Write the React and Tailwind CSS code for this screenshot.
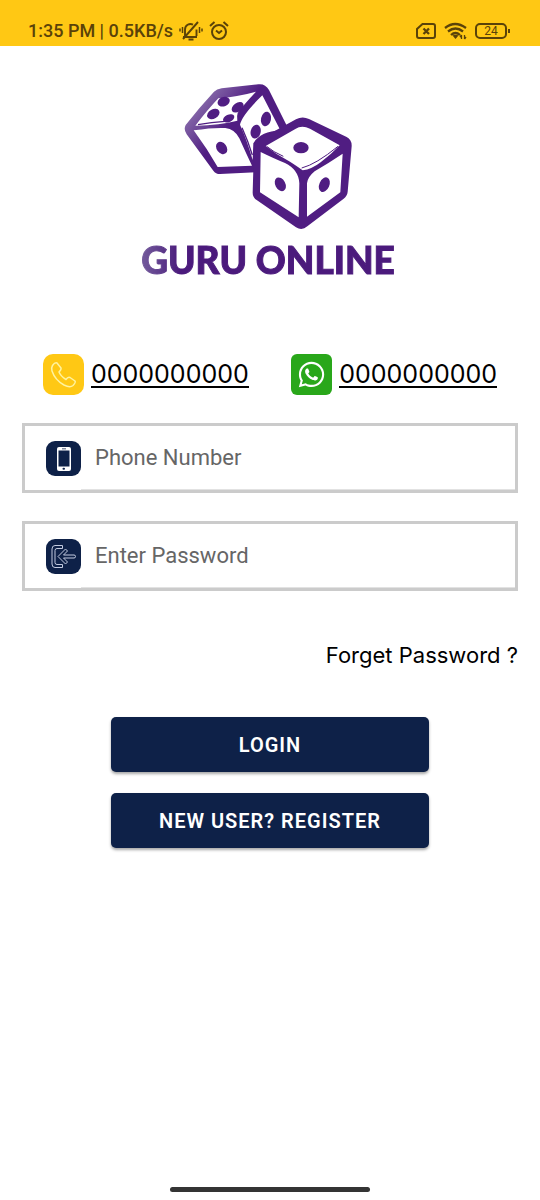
import { useState } from 'react';
import { FaWhatsapp } from 'react-icons/fa';
import { clsx } from 'clsx';

function StatusBar() {
  return (
    <header className="flex h-[46px] items-end justify-between bg-[#ffc814] pr-[30px] pb-1 pl-7 text-[#5a4209]">
      <div className="flex items-center">
        <span className="font-[Roboto,sans-serif] text-lg leading-[22px] font-medium">1:35 PM | 0.5KB/s</span>
        <svg className="ml-1.5 h-5 w-6" viewBox="0 0 24 20" fill="none" stroke="currentColor" strokeWidth="1.9">
          <path d="M6 15V8.500a5.500 5.500 0 0 1 8-4.900M17.500 8.500V15M4 16h14M9.500 18.500h5M19 1 4 18" />
          <path d="M3.500 6v6M1 7.500v3M20.500 6v6M23 7.500v3" strokeWidth="1.500" />
        </svg>
        <svg className="ml-1.5 h-5 w-5" viewBox="0 0 20 20" fill="none" stroke="currentColor" strokeWidth="2">
          <circle cx="10" cy="11" r="7" />
          <path d="m1 5 4.500-4M19 5l-4.500-4M7 9.500l3 2.500 3-2.500" />
        </svg>
      </div>
      <div className="flex items-center gap-2 pb-0.5">
        <svg className="h-[18px] w-5" viewBox="0 0 20 18" fill="none" stroke="currentColor" strokeWidth="2">
          <path d="M6.500 2H17a2 2 0 0 1 2 2v10a2 2 0 0 1-2 2H3a2 2 0 0 1-2-2V7Z" />
          <path d="m7.500 6.500 5.500 5.500m0-5.500L7.500 12" strokeWidth="2.300" />
        </svg>
        <svg className="h-[18px] w-[23px]" viewBox="0 0 23 18" fill="none" stroke="currentColor" strokeWidth="2.300">
          <path d="M1 6q10-8 21 0M4 9.500q7.500-6 15 0M7 13q4.500-4 9 0" />
          <path d="m8.500 13.500 3 3.500 3-3.500q-3-1.500-6 0" fill="currentColor" stroke="none" />
          <path d="M17.500 17v-4m-1.500 2 1.500-2M20.500 13v4m1.500-2-1.500 2" strokeWidth="1.300" />
        </svg>
        <div className="flex items-center gap-px">
          <span className="flex h-4 w-8 items-center justify-center rounded-[5px] border-2 border-current font-[Roboto,sans-serif] text-xs leading-3">24</span>
          <span className="h-1 w-0.5 bg-current" />
        </div>
      </div>
    </header>
  );
}

function DiceLogo() {
  return (
    <svg className="h-[165px] w-[200px]" viewBox="0 0 600 495" role="img" aria-label="Two dice">
      <defs>
        <linearGradient id="dice" gradientUnits="userSpaceOnUse" x1="50" y1="60" x2="170" y2="160">
          <stop offset="0" stopColor="#9a86b8" />
          <stop offset="1" stopColor="#501d82" />
        </linearGradient>
      </defs>
      <path d="M47 150Q90 95 132 50Q140 43 155 40L265 28Q285 25 297 45L352 155L258 292L150 297Q137 297 130 287L50 178Q40 164 47 150Z" fill="url(#dice)" />
      <path d="M76 152Q112 105 145 70Q200 66 258 50Q220 90 203 114Q200 122 202 137Q150 150 76 152Z" fill="#fff" />
      <path d="M71 166Q130 157 166 159Q194 162 208 190Q228 235 246 272L143 276Q112 222 71 166Z" fill="#fff" />
      <path d="M277 61L331 166Q270 170 250 205L248 255Q231 195 210 149Q216 120 277 61Z" fill="#fff" />
      <path d="M84 149Q125 142 165 139M216 158Q233 195 247 240" fill="none" stroke="#501d82" strokeWidth="4" />
      <g fill="#501d82">
        <ellipse cx="161" cy="80" rx="19" ry="14" transform="rotate(-22 161 80)" />
        <ellipse cx="203" cy="97" rx="20" ry="13" transform="rotate(-35 203 97)" />
        <ellipse cx="130" cy="117" rx="20" ry="14" transform="rotate(-30 130 117)" />
        <ellipse cx="176" cy="130" rx="18" ry="11" transform="rotate(-25 176 130)" />
        <ellipse cx="155" cy="219" rx="15" ry="20" transform="rotate(-37 155 219)" />
        <ellipse cx="288" cy="132" rx="15" ry="22" transform="rotate(12 288 132)" />
        <ellipse cx="257" cy="170" rx="15" ry="21" transform="rotate(14 257 170)" />
      </g>
      <path d="M378 133Q397 122 417 132L530 186Q546 194 545 214L533 350Q532 362 521 371L412 454Q396 468 378 457L260 375Q248 367 248 353L252 214Q253 202 265 195Z" fill="#501d82" />
      <path d="M287 213L376 162Q395 149 420 161L509 211Q482 240 452 262Q425 283 398 286Q385 276 360 260Q320 240 287 213Z" fill="#fff" />
      <path d="M272 231Q315 252 345 264Q386 284 388 325L386 427L270 352Z" fill="#fff" />
      <path d="M518 236L511 352L411 425V325Q413 306 434 289Q476 264 518 236Z" fill="#fff" />
      <path d="M290 214Q310 231 340 244M395 279Q438 268 504 214" fill="none" stroke="#501d82" strokeWidth="3" />
      <g fill="#501d82">
        <ellipse cx="393" cy="218" rx="23" ry="17" />
        <ellipse cx="331" cy="328" rx="15" ry="22" transform="rotate(-28 331 328)" />
        <ellipse cx="463" cy="329" rx="15" ry="23" transform="rotate(24 463 329)" />
      </g>
    </svg>
  );
}

function PhoneIcon() {
  return (
    <svg className="h-[41px] w-[41px] shrink-0" viewBox="0 0 41 41" aria-hidden="true">
      <rect width="41" height="41" rx="10" fill="#ffc814" />
      <path d="M9.500 11.500Q12 8 14 9L18 14Q18.500 15.500 16 18Q17.500 22 23 25.500Q25 22.500 27 23.500L32 27Q33 28.500 30 31.500Q27 34 21 31Q12 26 9 17Q8 14 9.500 11.500Z" fill="none" stroke="#fff3a0" strokeWidth="1.500" strokeLinejoin="round" />
    </svg>
  );
}

function WhatsappIcon() {
  return (
    <span className="flex h-[41px] w-[41px] shrink-0 items-center justify-center rounded-md bg-[#29a71a] text-white">
      <FaWhatsapp className="h-[29px] w-[29px]" aria-hidden="true" />
    </span>
  );
}

function ContactLink({ href, icon, number, label }) {
  return (
    <a href={href} aria-label={`${label} ${number}`} className="flex items-center gap-[7px] text-black">
      {icon}
      <span className="border-b-2 border-black font-[Inter,sans-serif] text-[25px] leading-6">{number}</span>
    </a>
  );
}

function MobileIcon() {
  return (
    <svg className="h-[35px] w-[35px] shrink-0" viewBox="0 0 35 35" aria-hidden="true">
      <rect width="35" height="35" rx="9" fill="#0e2148" />
      <rect x="11" y="6" width="14" height="24" rx="2" fill="#fff" />
      <path d="M12.500 9.500h11v16h-11zM16 7.500h4v.8h-4z" fill="#0e2148" />
      <rect x="16.500" y="26.800" width="2.500" height="2" rx="1" fill="#0e2148" />
    </svg>
  );
}

function EnterIcon() {
  return (
    <svg className="h-[35px] w-[35px] shrink-0" viewBox="0 0 35 35" fill="none" stroke="#c3cbe0" aria-hidden="true">
      <rect width="35" height="35" rx="9" fill="#0e2148" stroke="none" />
      <path d="M16.500 6.500H9Q6 6.500 6 10V25Q6 28.500 9 28.500H16.500V25.500H11Q9 25.500 9 23.500V11.500Q9 9.500 11 9.500H16.500Z" />
      <path d="m12 17.500 7.500-7.500 2 2-4 4H28a1.500 1.500 0 0 1 0 3H17.500l4 4-2 2Z" strokeLinejoin="round" />
    </svg>
  );
}

function Field({ id, icon, placeholder, ...props }) {
  return (
    <div className="flex h-[70px] items-center border-3 border-[#cbcbcb] pl-[21px]">
      <label htmlFor={id} aria-label={placeholder}>{icon}</label>
      <input
        id={id}
        placeholder={placeholder}
        className="h-full min-w-0 flex-1 border-b border-[#e2e2e2] bg-transparent pl-3.5 font-[Roboto,sans-serif] text-[22px] text-black outline-none placeholder:text-[#666]"
        {...props}
      />
    </div>
  );
}

function Button({ className, children, ...props }) {
  return (
    <button
      className={clsx(
        'h-[55px] w-full rounded-[5px] bg-[#0e2148] font-[Roboto,sans-serif] text-xl font-semibold tracking-wider text-white',
        'shadow-[0_2px_3px_rgba(0,0,0,0.35)]',
        className
      )}
      {...props}
    >
      {children}
    </button>
  );
}

export default function App() {
  const [phone, setPhone] = useState('');
  const [password, setPassword] = useState('');

  return (
    <div className="flex min-h-screen flex-col bg-white">
      <StatusBar />
      <main className="flex flex-1 flex-col px-[22px] pt-[29px]">
        <div className="flex flex-col items-center">
          <DiceLogo />
          <h1 className="bg-linear-to-r from-[#745b9c] to-[#4b1a7c] to-15% bg-clip-text pr-1 font-[Lato,sans-serif] text-[37px] leading-10 font-black text-transparent [-webkit-text-stroke:1px_transparent]">
            GURU ONLINE
          </h1>
        </div>

        <div className="mt-[74px] flex justify-between px-[21px]">
          <ContactLink href="tel:0000000000" icon={<PhoneIcon />} number="0000000000" label="Call" />
          <ContactLink href="#whatsapp" icon={<WhatsappIcon />} number="0000000000" label="WhatsApp" />
        </div>

        <form className="mt-7 flex flex-col" onSubmit={(e) => e.preventDefault()}>
          <div className="flex flex-col gap-7">
            <Field
              id="phone"
              type="tel"
              icon={<MobileIcon />}
              placeholder="Phone Number"
              value={phone}
              onChange={(e) => setPhone(e.target.value)}
            />
            <Field
              id="password"
              type="password"
              icon={<EnterIcon />}
              placeholder="Enter Password"
              value={password}
              onChange={(e) => setPassword(e.target.value)}
            />
          </div>
          <a href="#forget" className="mt-12 self-end font-[Inter,sans-serif] text-[22px] leading-8 text-black">
            Forget Password ?
          </a>
          <div className="mx-auto mt-[46px] flex w-[64%] flex-col gap-[21px]">
            <Button type="submit">LOGIN</Button>
            <Button type="button">NEW USER? REGISTER</Button>
          </div>
        </form>
      </main>
      <div className="mx-auto mb-2 h-[5px] w-[200px] rounded-full bg-[#343434]" />
    </div>
  );
}
